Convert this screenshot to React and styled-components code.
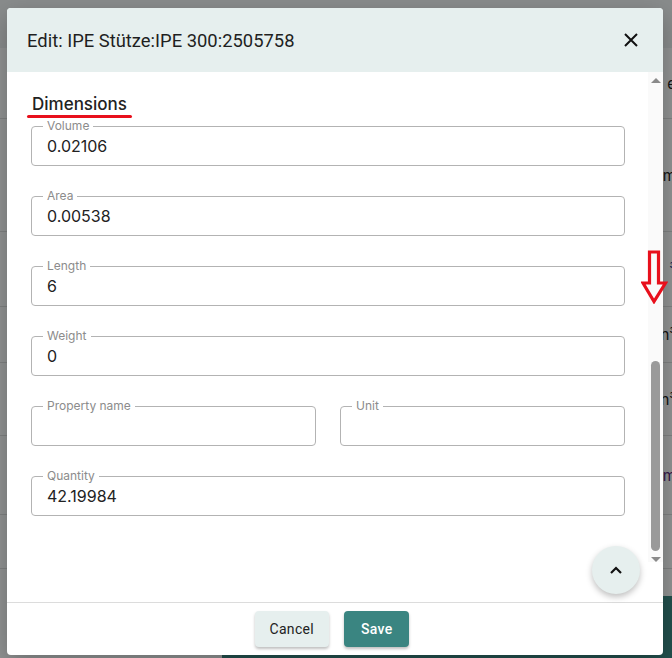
import React from "react";
import styled, { createGlobalStyle } from "styled-components";

const GlobalStyle = createGlobalStyle`
  html, body {
    margin: 0;
    padding: 0;
    width: 672px;
    height: 658px;
    overflow: hidden;
    font-family: Inter, "Noto Sans", sans-serif;
  }
`;

const Page = styled.div`
  position: relative;
  width: 672px;
  height: 658px;
  background: #f2f5f5;
  overflow: hidden;
`;

const PageTop = styled.div`
  height: 48px;
  background: #e4eaea;
`;

const PageRows = styled.div`
  display: flex;
  flex-direction: column;
`;

const PageRow = styled.div`
  height: ${(p) => p.h}px;
  border-bottom: 1px solid #d4d8d8;
  display: flex;
  align-items: center;
  justify-content: flex-end;
  font-size: 15px;
  color: ${(p) => p.color || "#222"};
  span {
    margin-right: -4px;
  }
`;

const PageBar = styled.div`
  position: absolute;
  left: 222px;
  right: 0;
  bottom: 0;
  height: 62px;
  background: #3a8581;
`;

const Backdrop = styled.div`
  position: absolute;
  inset: 0;
  background: rgba(0, 0, 0, 0.4);
`;

const Dialog = styled.div`
  position: absolute;
  left: 7px;
  top: 8px;
  width: 656px;
  height: 647px;
  background: #fff;
  border-radius: 4px;
  overflow: hidden;
  display: flex;
  flex-direction: column;
  box-shadow: 0 8px 24px rgba(0, 0, 0, 0.25);
`;

const Header = styled.div`
  height: 64px;
  flex: none;
  background: #e6efee;
  display: flex;
  align-items: center;
  justify-content: space-between;
  padding: 0 20px 0 20px;
  box-sizing: border-box;
`;

const Title = styled.h2`
  margin: 0;
  font-family: Roboto, "Noto Sans", sans-serif;
  font-size: 18.4px;
  font-weight: 400;
  color: #1f1f1f;
`;

const CloseButton = styled.button`
  border: 0;
  background: none;
  padding: 0;
  width: 24px;
  height: 24px;
  display: flex;
  align-items: center;
  justify-content: center;
  cursor: pointer;
`;

const BodyWrap = styled.div`
  position: relative;
  flex: 1;
  display: flex;
  min-height: 0;
`;

const Content = styled.div`
  flex: 1;
  padding: 22px 23px 0 24px;
  display: flex;
  flex-direction: column;
`;

const SectionTitle = styled.h3`
  position: relative;
  align-self: flex-start;
  margin: 0 0 12px 1px;
  font-size: 17px;
  font-weight: 500;
  color: #222;
  line-height: 20px;
  &::after {
    content: "";
    position: absolute;
    left: -5px;
    right: -5px;
    bottom: -4px;
    height: 3px;
    border-radius: 2px;
    background: #e8101c;
  }
`;

const Fields = styled.div`
  display: grid;
  grid-template-columns: 1fr 1fr;
  column-gap: 24px;
  row-gap: 30px;
`;

const Field = styled.div`
  position: relative;
  grid-column: ${(p) => (p.half ? "auto" : "1 / -1")};
  height: 40px;
  border: 1px solid #b3b3b3;
  border-radius: 4px;
  box-sizing: border-box;
  display: flex;
  align-items: center;
  padding: 0 15px;
`;

const FieldLabel = styled.label`
  position: absolute;
  top: -8px;
  left: 11px;
  padding: 0 4px;
  background: #fff;
  font-size: 12px;
  line-height: 14px;
  color: #8c8c8c;
`;

const FieldValue = styled.div`
  font-size: 16px;
  color: #222;
`;

const Scrollbar = styled.div`
  width: 15px;
  flex: none;
  background: #fafafa;
  display: flex;
  flex-direction: column;
  align-items: center;
  padding: 6px 0 0;
  box-sizing: border-box;
  height: 490px;
`;

const Arrow = styled.div`
  width: 0;
  height: 0;
  border-left: 5px solid transparent;
  border-right: 5px solid transparent;
  ${(p) =>
    p.down
      ? "border-top: 5px solid #8a8a8a;"
      : "border-bottom: 5px solid #8a8a8a;"}
`;

const Track = styled.div`
  flex: 1;
  width: 100%;
  display: flex;
  flex-direction: column;
  justify-content: flex-end;
  align-items: center;
  padding: 0 0 6px;
  box-sizing: border-box;
`;

const Thumb = styled.div`
  width: 9px;
  height: 190px;
  border-radius: 5px;
  background: #9a9a9a;
`;

const Fab = styled.button`
  position: absolute;
  right: 23px;
  bottom: 8px;
  width: 48px;
  height: 48px;
  border-radius: 50%;
  border: 0;
  background: #e6efee;
  box-shadow: 0 3px 6px rgba(0, 0, 0, 0.25);
  display: flex;
  align-items: center;
  justify-content: center;
`;

const Annotation = styled.svg`
  position: absolute;
  left: 641px;
  top: 250px;
`;

const Footer = styled.div`
  flex: none;
  height: 53px;
  border-top: 1px solid #dcdcdc;
  display: flex;
  justify-content: center;
  align-items: flex-start;
  gap: 15px;
  padding: 8px 6px 0 0;
  box-sizing: border-box;
`;

const Button = styled.button`
  height: 36px;
  padding: 0 ${(p) => (p.primary ? 17 : 15)}px;
  border: 0;
  border-radius: 4px;
  font-family: Roboto, "Noto Sans", sans-serif;
  font-size: 14px;
  font-weight: ${(p) => (p.primary ? 500 : 400)};
  letter-spacing: 0.3px;
  color: ${(p) => (p.primary ? "#fff" : "#222")};
  background: ${(p) => (p.primary ? "#3a8581" : "#e6efee")};
  box-shadow: 0 2px 3px rgba(0, 0, 0, 0.25);
`;

const fields = [
  { label: "Volume", value: "0.02106" },
  { label: "Area", value: "0.00538" },
  { label: "Length", value: "6" },
  { label: "Weight", value: "0" },
  { label: "Property name", value: "", half: true },
  { label: "Unit", value: "", half: true },
  { label: "Quantity", value: "42.19984" },
];

const bgRows = [
  { h: 70, t: "e" },
  { h: 112, t: "m" },
  { h: 74, t: "³", color: "#1c3a8a" },
  { h: 55, t: "n³" },
  { h: 72, t: "n³" },
  { h: 78, t: "m", color: "#5a2a7a" },
  { h: 53, t: "" },
];

export default function App() {
  return (
    <>
      <GlobalStyle />
      <Page>
        <PageTop />
        <PageRows>
          {bgRows.map((r, i) => (
            <PageRow key={i} h={r.h} color={r.color}>
              <span>{r.t}</span>
            </PageRow>
          ))}
        </PageRows>
        <PageBar />
        <Backdrop />
        <Dialog>
          <Header>
            <Title>Edit: IPE Stütze:IPE 300:2505758</Title>
            <CloseButton aria-label="close">
              <svg width="14" height="14" viewBox="0 0 14 14">
                <path d="M1 1L13 13M13 1L1 13" stroke="#111" strokeWidth="2" />
              </svg>
            </CloseButton>
          </Header>
          <BodyWrap>
            <Content>
              <SectionTitle>Dimensions</SectionTitle>
              <Fields>
                {fields.map((f) => (
                  <Field key={f.label} half={f.half}>
                    <FieldLabel>{f.label}</FieldLabel>
                    <FieldValue>{f.value}</FieldValue>
                  </Field>
                ))}
              </Fields>
            </Content>
            <Scrollbar>
              <Arrow />
              <Track>
                <Thumb />
              </Track>
              <Arrow down />
            </Scrollbar>
            <Fab aria-label="scroll to top">
              <svg width="14" height="9" viewBox="0 0 14 9">
                <path d="M2 7L7 2L12 7" stroke="#111" strokeWidth="2.2" fill="none" />
              </svg>
            </Fab>
          </BodyWrap>
          <Footer>
            <Button>Cancel</Button>
            <Button primary>Save</Button>
          </Footer>
        </Dialog>
        <Annotation width="27" height="54" viewBox="0 0 27 54">
          <path
            d="M8.5 2H17.5V33H24.5L13 51.5L2 33H8.5Z"
            fill="none"
            stroke="#e8101c"
            strokeWidth="3.2"
            strokeLinejoin="miter"
          />
        </Annotation>
      </Page>
    </>
  );
}
